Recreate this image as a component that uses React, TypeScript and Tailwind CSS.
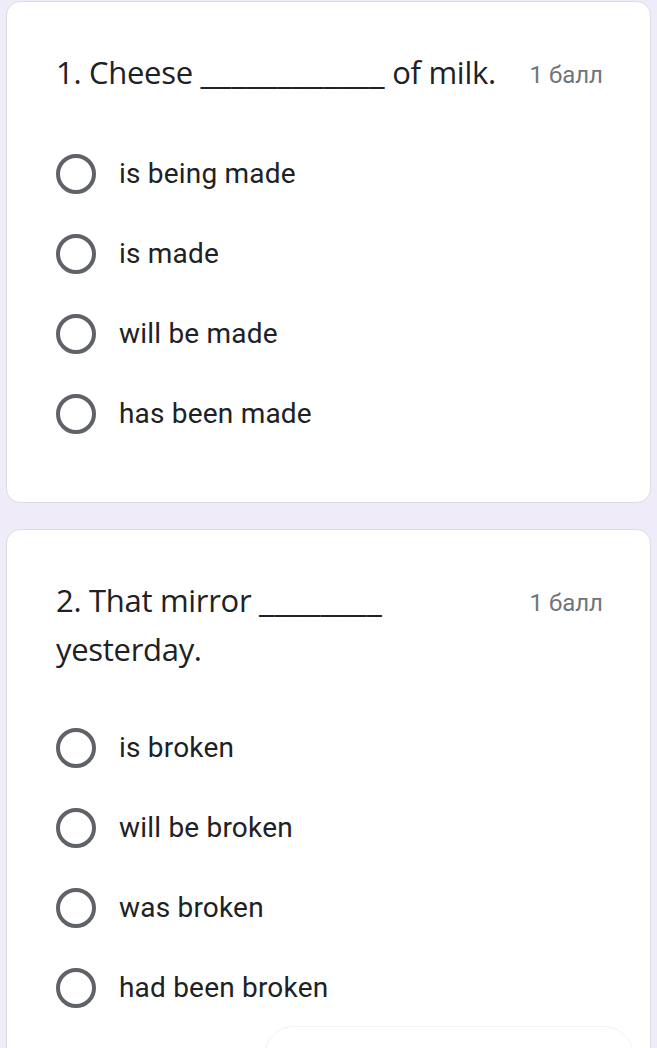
import React from 'react';

type Question = {
  id: number;
  before: string;
  blank: string;
  after: string;
  points: string;
  options: string[];
};

const QUESTIONS: Question[] = [
  {
    id: 1,
    before: '1. Cheese ',
    blank: '____________',
    after: ' of milk.',
    points: '1 балл',
    options: ['is being made', 'is made', 'will be made', 'has been made'],
  },
  {
    id: 2,
    before: '2. That mirror ',
    blank: '________',
    after: ' yesterday.',
    points: '1 балл',
    options: ['is broken', 'will be broken', 'was broken', 'had been broken'],
  },
];

function Radio() {
  return <span className="box-border inline-block h-[40px] w-[40px] shrink-0 rounded-full border-[4px] border-[#5f6368]" />;
}

function QuestionCard({ q }: { q: Question }) {
  return (
    <section className="rounded-[14px] border border-[#dadce0] bg-white pl-[49px] pr-[47px] pt-[46px] pb-[48px]">
      <div className="flex items-start justify-between gap-[28px]">
        <h2 className="font-['Open_Sans',sans-serif] text-[31px] leading-[49px] tracking-[-0.3px] text-[#202124]">
          {q.before}
          <span className="text-[35px] leading-[30px] tracking-normal">{q.blank}</span>
          {q.after}
        </h2>
        <span className="shrink-0 pt-[3px] font-['Roboto',sans-serif] text-[24px] leading-[49px] text-[#70757a]">{q.points}</span>
      </div>
      <div className="mt-[34px] flex flex-col">
        {q.options.map(opt => (
          <label key={opt} className="flex h-[80px] items-center gap-[23px]">
            <Radio />
            <span className="font-['Roboto',sans-serif] text-[28px] tracking-[0.2px] text-[#202124]">{opt}</span>
          </label>
        ))}
      </div>
    </section>
  );
}

export default function App() {
  return (
    <div className="relative h-[1048px] overflow-hidden bg-[#f0ebf8] px-[6px] pt-[1px]">
      <div className="flex flex-col gap-[26px]">
        {QUESTIONS.map(q => (
          <QuestionCard key={q.id} q={q} />
        ))}
      </div>
      <div className="absolute left-[264px] top-[1026px] h-[60px] w-[370px] rounded-[30px] border border-[#f3f3f3] bg-white" />
    </div>
  );
}
